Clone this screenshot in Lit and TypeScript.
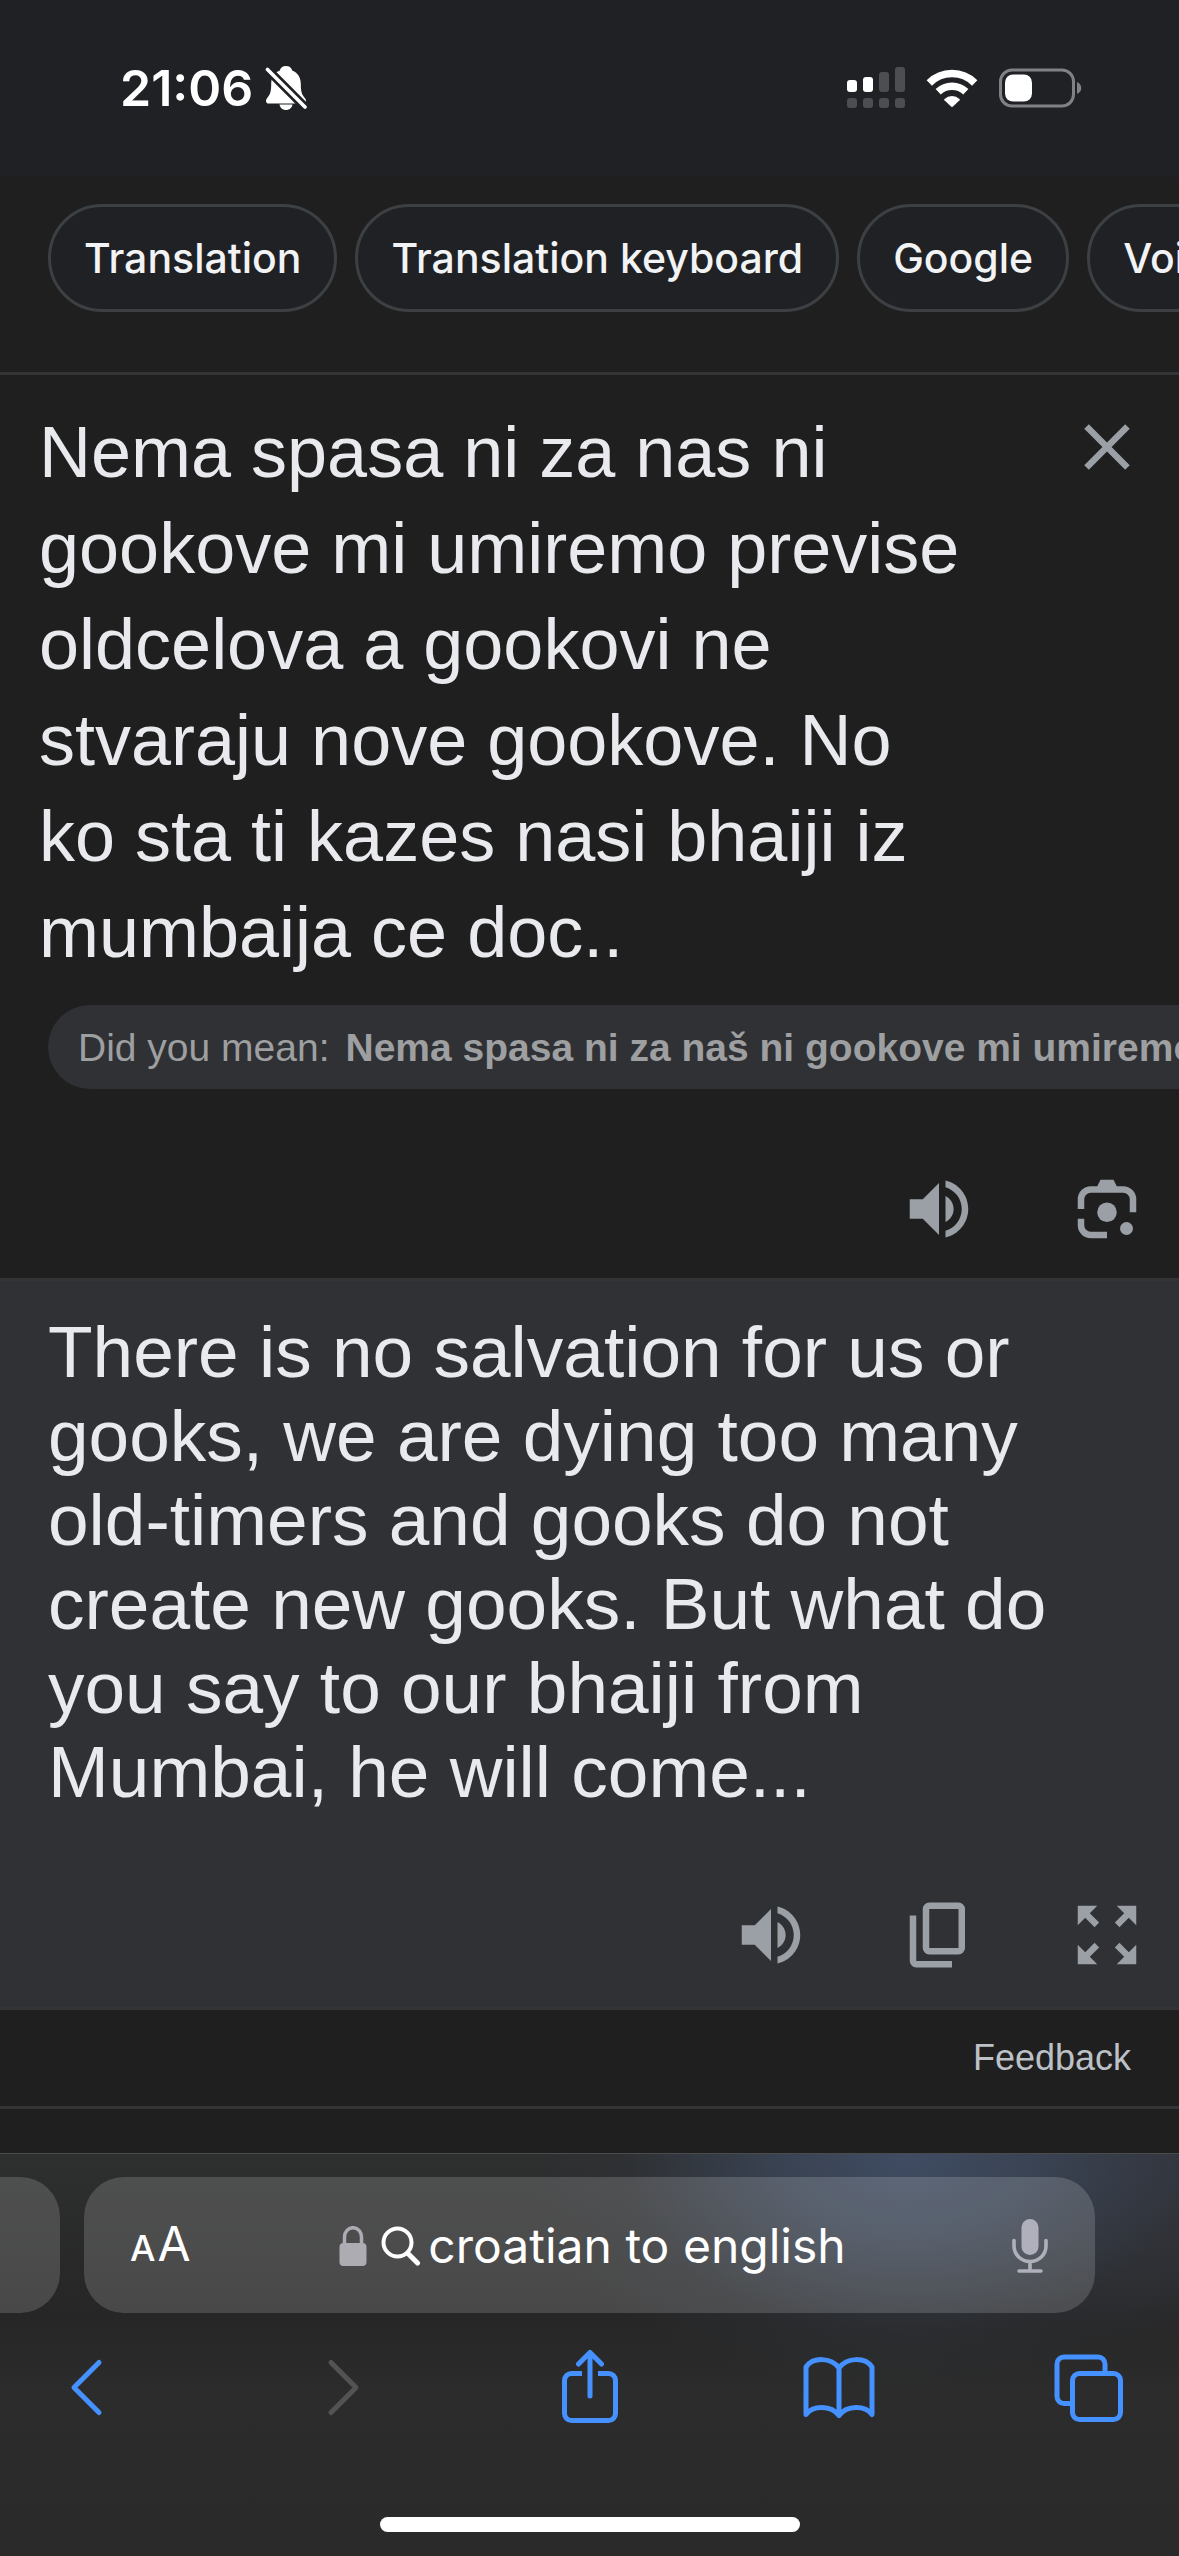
import { LitElement, html, css, svg } from "lit";
import { customElement, property } from "lit/decorators.js";

const glyphs: Record<string, unknown> = {
  close: svg`<path d="M19 6.41 17.59 5 12 10.59 6.41 5 5 6.41 10.59 12 5 17.59 6.41 19 12 13.41 17.59 19 19 17.59 13.41 12z"/>`,
  speaker: svg`<path d="M3 9v6h4l5 5V4L7 9H3zm13.500 3c0-1.770-1.020-3.290-2.500-4.030v8.050c1.480-.73 2.500-2.250 2.500-4.020zM14 3.230v2.060c2.890.86 5 3.540 5 6.710s-2.110 5.850-5 6.710v2.060c4.010-.91 7-4.490 7-8.770s-2.990-7.860-7-8.770z"/>`,
  lens: svg`<path d="M9 5 10 3h4l1 2h2a4 4 0 0 1 4 4v4h-2V9a2 2 0 0 0-2-2H7a2 2 0 0 0-2 2v3H3V9a4 4 0 0 1 4-4zM3 15h2v2a2 2 0 0 0 2 2h5v2H7a4 4 0 0 1-4-4z"/><circle cx="12" cy="13" r="3"/><circle cx="18" cy="18" r="2"/>`,
  copy: svg`<path fill-rule="evenodd" d="M9 2h9a2 2 0 0 1 2 2v12a2 2 0 0 1-2 2H9a2 2 0 0 1-2-2V4a2 2 0 0 1 2-2zm0 2v12h9V4zM3 6h2v14h11v2H5a2 2 0 0 1-2-2z"/>`,
  expand: svg`<path d="M15 3l2.300 2.300-2.890 2.870 1.420 1.420L18.700 6.700 21 9V3h-6zM3 9l2.300-2.300 2.870 2.890 1.420-1.420L6.700 5.300 9 3H3v6zm6 12l-2.300-2.300 2.890-2.870-1.420-1.420L5.300 17.300 3 15v6h6zm12-6l-2.300 2.300-2.870-2.890-1.420 1.420 2.890 2.870L15 21h6v-6z"/>`,
};

/** A 24-unit filled glyph. */
@customElement("tool-icon")
export class ToolIcon extends LitElement {
  @property() name = "close";
  static styles = css`
    :host { display: block; width: 78px; height: 78px; }
    svg { display: block; width: 100%; height: 100%; fill: #9aa0a6; }
  `;
  render() {
    return html`<svg viewBox="0 0 24 24" aria-hidden="true">${glyphs[this.name]}</svg>`;
  }
}

/** Clock, silent bell, signal, wifi and battery. */
@customElement("status-bar")
export class StatusBar extends LitElement {
  static styles = css`
    :host {
      display: flex; align-items: center; justify-content: space-between;
      box-sizing: border-box; height: 177px; padding: 0 97px 2px 120px;
      background: #202124; color: #fff;
      font: 600 50px/60px Inter, "Liberation Sans", sans-serif;
    }
    .side { display: flex; align-items: center; gap: 12px; }
    .side.right { gap: 20px; }
    svg { display: block; }
  `;
  render() {
    return html`
      <div class="side">
        <time>21:06</time>
        <svg width="42" height="46" viewBox="0 0 42 46" role="img" aria-label="Silent mode">
          <path fill="#fff" d="M21 1c3.500 0 5.600 2 6.200 4.500 6 2.200 8.600 7.500 8.600 13.500 0 8 1.200 10.500 4 14 1 1.300 1.200 2 1.200 3 0 1.600-1.200 2.600-3 2.600H4c-1.800 0-3-1-3-2.600 0-1 .3-1.700 1.200-3 2.800-3.500 4-6 4-14 0-6 2.600-11.300 8.600-13.500C15.400 3 17.500 1 21 1z"/>
          <path fill="#fff" d="M14.500 39.500h13c-.5 3.300-3.200 5.500-6.500 5.500s-6-2.200-6.500-5.500z"/>
          <path stroke="#202124" stroke-width="9" d="M-1 1 43 45"/>
          <path stroke="#fff" stroke-width="3.600" stroke-linecap="round" d="M2.500 4.500 40 42"/>
        </svg>
      </div>
      <div class="side right">
        <svg width="60" height="42" viewBox="0 0 60 42" role="img" aria-label="Signal">
          <g fill="#fff"><rect x="1" y="13" width="10" height="12" rx="3"/><rect x="17" y="10" width="10" height="15" rx="3"/></g>
          <g fill="#4d4e51">
            <rect x="33" y="5" width="10" height="20" rx="3"/><rect x="49" y="0" width="10" height="25" rx="3"/>
            <rect x="1" y="31" width="10" height="10" rx="3"/><rect x="17" y="31" width="10" height="10" rx="3"/>
            <rect x="33" y="31" width="10" height="10" rx="3"/><rect x="49" y="31" width="10" height="10" rx="3"/>
          </g>
        </svg>
        <svg width="52" height="38" viewBox="0 0 52 38" role="img" aria-label="Wi-Fi">
          <g fill="none" stroke="#fff" stroke-width="7.500">
            <path d="M3.300 14a32 32 0 0 1 45.400 0"/><path d="M12.200 22.800a20 20 0 0 1 27.600 0"/>
          </g>
          <path fill="#fff" d="M18.500 30a11 11 0 0 1 15 0q.6.600 0 1.200L27 37.500q-1 .8-2 0L18.500 31.200q-.6-.6 0-1.200z"/>
        </svg>
        <svg width="84" height="40" viewBox="0 0 84 40" role="img" aria-label="Battery">
          <rect x="2.500" y="2" width="73" height="36" rx="11.500" fill="none" stroke="#808183" stroke-width="3"/>
          <rect x="7" y="6.500" width="27" height="27" rx="8" fill="#fff"/>
          <path fill="#808183" d="M79 14c3 1.500 4.300 3.500 4.300 6s-1.300 4.500-4.300 6z"/>
        </svg>
      </div>
    `;
  }
}

@customElement("topic-chips")
export class TopicChips extends LitElement {
  private topics = ["Translation", "Translation keyboard", "Google", "Voice"];
  static styles = css`
    :host { display: block; padding: 27px 0 60px 48px; overflow: hidden; border-bottom: 3px solid #333436; }
    nav { display: flex; gap: 18px; }
    a {
      flex: none; box-sizing: border-box; height: 108px; padding: 0 33px;
      border: 3px solid #3c4043; border-radius: 54px; background: #202124;
      color: #f1f3f4; text-decoration: none; white-space: nowrap;
      font: 500 41px/102px Inter, "Liberation Sans", sans-serif;
    }
  `;
  render() {
    return html`<nav aria-label="Related">${this.topics.map((t) => html`<a href="#">${t}</a>`)}</nav>`;
  }
}

@customElement("source-panel")
export class SourcePanel extends LitElement {
  @property() text = "";
  static styles = css`
    :host { display: block; overflow: hidden; color: #e8eaed; font-family: "Liberation Sans", Arial, sans-serif; }
    .entry { display: grid; grid-template-columns: 1fr auto; align-items: start; column-gap: 93px; padding: 29px 33px 0 39px; }
    textarea {
      display: block; width: 100%; box-sizing: border-box; margin: 0; padding: 0; border: 0;
      resize: none; overflow: hidden; outline: 0; background: none; color: inherit;
      font: 72px/96px "Liberation Sans", Arial, sans-serif;
    }
    button { display: block; padding: 0; border: 0; background: none; }
    .clear { margin-top: 4px; }
    .hint {
      display: flex; gap: 16px; width: max-content; margin: 25px 0 0 48px; padding: 2px 30px 0;
      border-radius: 42px; background: #303134; color: #9d9fa1; text-decoration: none;
      white-space: nowrap; font-size: 39px; line-height: 82px;
    }
    .tools { display: flex; justify-content: flex-end; gap: 90px; padding: 81px 33px 30px; }
  `;
  render() {
    return html`
      <div class="entry">
        <textarea rows="6" spellcheck="false" aria-label="Source text" .value=${this.text}></textarea>
        <button class="clear" aria-label="Clear"><tool-icon name="close"></tool-icon></button>
      </div>
      <a class="hint" href="#"><span>Did you mean:</span><b>Nema spasa ni za naš ni gookove mi umiremo</b></a>
      <div class="tools">
        <button aria-label="Listen"><tool-icon name="speaker"></tool-icon></button>
        <button aria-label="Camera"><tool-icon name="lens"></tool-icon></button>
      </div>
    `;
  }
}

@customElement("result-panel")
export class ResultPanel extends LitElement {
  @property() text = "";
  static styles = css`
    :host {
      display: block; border: solid #333436; border-width: 3px 0; background: #303134;
      color: #e8eaed; font-family: "Liberation Sans", Arial, sans-serif;
    }
    p { margin: 0; padding: 29px 48px 0; font-size: 73px; line-height: 84px; }
    .tools { display: flex; justify-content: flex-end; gap: 90px; padding: 82px 33px 33px; }
    button { display: block; padding: 0; border: 0; background: none; }
  `;
  render() {
    return html`
      <p>${this.text}</p>
      <div class="tools">
        <button aria-label="Listen"><tool-icon name="speaker"></tool-icon></button>
        <button aria-label="Copy"><tool-icon name="copy"></tool-icon></button>
        <button aria-label="Full screen"><tool-icon name="expand"></tool-icon></button>
      </div>
    `;
  }
}

/** Address field, toolbar and home indicator. */
@customElement("browser-bar")
export class BrowserBar extends LitElement {
  static styles = css`
    :host {
      display: block; overflow: hidden; border-top: 1px solid #4a4b4d;
      background:
        radial-gradient(ellipse 380px 240px at 77% 0, #3f4c62 0%, #3c475acc 35%, #2f333a66 75%, transparent 100%),
        radial-gradient(ellipse 240px 200px at 100% 0, #35373f 0%, transparent 100%),
        linear-gradient(#2e2f2f 0, #262626 160px, #2c2c2c 240px, #2a2a2a 100%);
      color: #fff; font-family: Inter, "Liberation Sans", sans-serif;
    }
    .tabs { display: flex; gap: 24px; padding: 23px 84px 0 0; }
    .previous, .address { height: 136px; background: rgba(255, 255, 255, 0.16); }
    .previous { flex: none; width: 60px; border-radius: 0 40px 40px 0; }
    .address {
      flex: 1; display: grid; grid-template-columns: 1fr auto 1fr; align-items: center;
      box-sizing: border-box; padding: 2px 46px 0; border-radius: 40px;
    }
    button { display: block; padding: 0; border: 0; background: none; color: inherit; font: inherit; }
    .reader { display: flex; align-items: baseline; gap: 2px; justify-self: start; font-size: 48px; line-height: 60px; }
    .small { font-size: 36px; font-weight: 500; }
    .query { display: flex; align-items: center; margin-left: 6px; font-size: 48px; line-height: 60px; white-space: nowrap; }
    .query svg { margin-right: 14px; }
    .query .glass { margin-right: 7px; }
    .mic { justify-self: end; }
    .toolbar { display: flex; justify-content: space-between; align-items: center; padding: 36px 54px 0; }
    svg { display: block; }
    .line { fill: none; stroke: #4591ff; stroke-width: 5; stroke-linecap: round; stroke-linejoin: round; }
    .off { stroke: #535354; }
    .home { width: 420px; height: 15px; margin: 92px auto 24px; border-radius: 8px; background: #fff; }
  `;
  render() {
    return html`
      <div class="tabs">
        <div class="previous"></div>
        <div class="address">
          <button class="reader" aria-label="Page settings"><span class="small">A</span><span>A</span></button>
          <div class="query">
            <svg width="28" height="40" viewBox="0 0 28 40" aria-hidden="true">
              <rect x="0.500" y="17" width="27" height="23" rx="4" fill="#aeacb3"/>
              <path fill="none" stroke="#aeacb3" stroke-width="3.500" d="M5.500 18v-7a8.500 9.300 0 0 1 17 0v7"/>
            </svg>
            <svg class="glass" width="40" height="40" viewBox="0 0 40 40" aria-hidden="true">
              <g fill="none" stroke="#fff" stroke-width="4"><circle cx="16.500" cy="16.500" r="14"/><path stroke-width="5" stroke-linecap="round" d="M27 27.500 36.500 37"/></g>
            </svg>
            <span>croatian to english</span>
          </div>
          <button class="mic" aria-label="Dictate">
            <svg width="38" height="54" viewBox="0 0 38 54">
              <rect x="10.500" y="0" width="17" height="36" rx="8.500" fill="#b0b0bd"/>
              <g fill="none" stroke="#b0b0bd" stroke-width="3.600" stroke-linecap="round"><path d="M3 21.500v5.500a16 15.500 0 0 0 32 0v-5.500M19 43v8M8 52h22"/></g>
            </svg>
          </button>
        </div>
      </div>
      <div class="toolbar">
        <button aria-label="Back"><svg class="line" width="72" height="76" viewBox="0 0 72 76"><path d="M45 13.500 20 38.500l25 25"/></svg></button>
        <button aria-label="Forward" disabled><svg class="line off" width="72" height="76" viewBox="0 0 72 76"><path d="M27 13.500 52 38.500l-25 25"/></svg></button>
        <button aria-label="Share"><svg class="line" width="72" height="76" viewBox="-6 0 72 76"><path stroke-linecap="butt" d="M22 24.500H11.500a7 7 0 0 0-7 7v33a7 7 0 0 0 7 7h37a7 7 0 0 0 7-7v-33a7 7 0 0 0-7-7H38"/><path d="M30 47V3.500M18.500 15 30 3.500 41.500 15"/></svg></button>
        <button aria-label="Bookmarks"><svg class="line" width="72" height="76" viewBox="0 0 72 76"><path d="M36 66.500V19C28 8 10 8 3 18v47.500c7-9.500 25-9.500 33 1 8-10.500 26-10.500 33-1V18C62 8 44 8 36 19"/></svg></button>
        <button aria-label="Tabs"><svg class="line" width="72" height="76" viewBox="-1 0 72 76"><rect x="18.500" y="24.500" width="48" height="46" rx="7"/><path stroke-linecap="butt" d="M18.500 54.500H10a7 7 0 0 1-7-7V15a7 7 0 0 1 7-7h34a7 7 0 0 1 7 7v9.500"/></svg></button>
      </div>
      <div class="home"></div>
    `;
  }
}

@customElement("app-root")
export class AppRoot extends LitElement {
  private source =
    "Nema spasa ni za nas ni gookove mi umiremo previse oldcelova a gookovi ne stvaraju nove gookove. No ko sta ti kazes nasi bhaiji iz mumbaija ce doc..";
  private result =
    "There is no salvation for us or gooks, we are dying too many old-timers and gooks do not create new gooks. But what do you say to our bhaiji from Mumbai, he will come...";
  static styles = css`
    :host { display: flex; flex-direction: column; min-height: 100vh; background: #1f1f1f; }
    main { flex: 1; }
    .feedback { display: flex; justify-content: flex-end; padding: 0 48px; border-bottom: 3px solid #333436; }
    .feedback a { color: #bdc1c6; text-decoration: none; font: 36px/96px "Liberation Sans", Arial, sans-serif; }
  `;
  render() {
    return html`
      <status-bar></status-bar>
      <main>
        <topic-chips></topic-chips>
        <source-panel .text=${this.source}></source-panel>
        <result-panel .text=${this.result}></result-panel>
        <div class="feedback"><a href="#">Feedback</a></div>
      </main>
      <browser-bar></browser-bar>
    `;
  }
}
